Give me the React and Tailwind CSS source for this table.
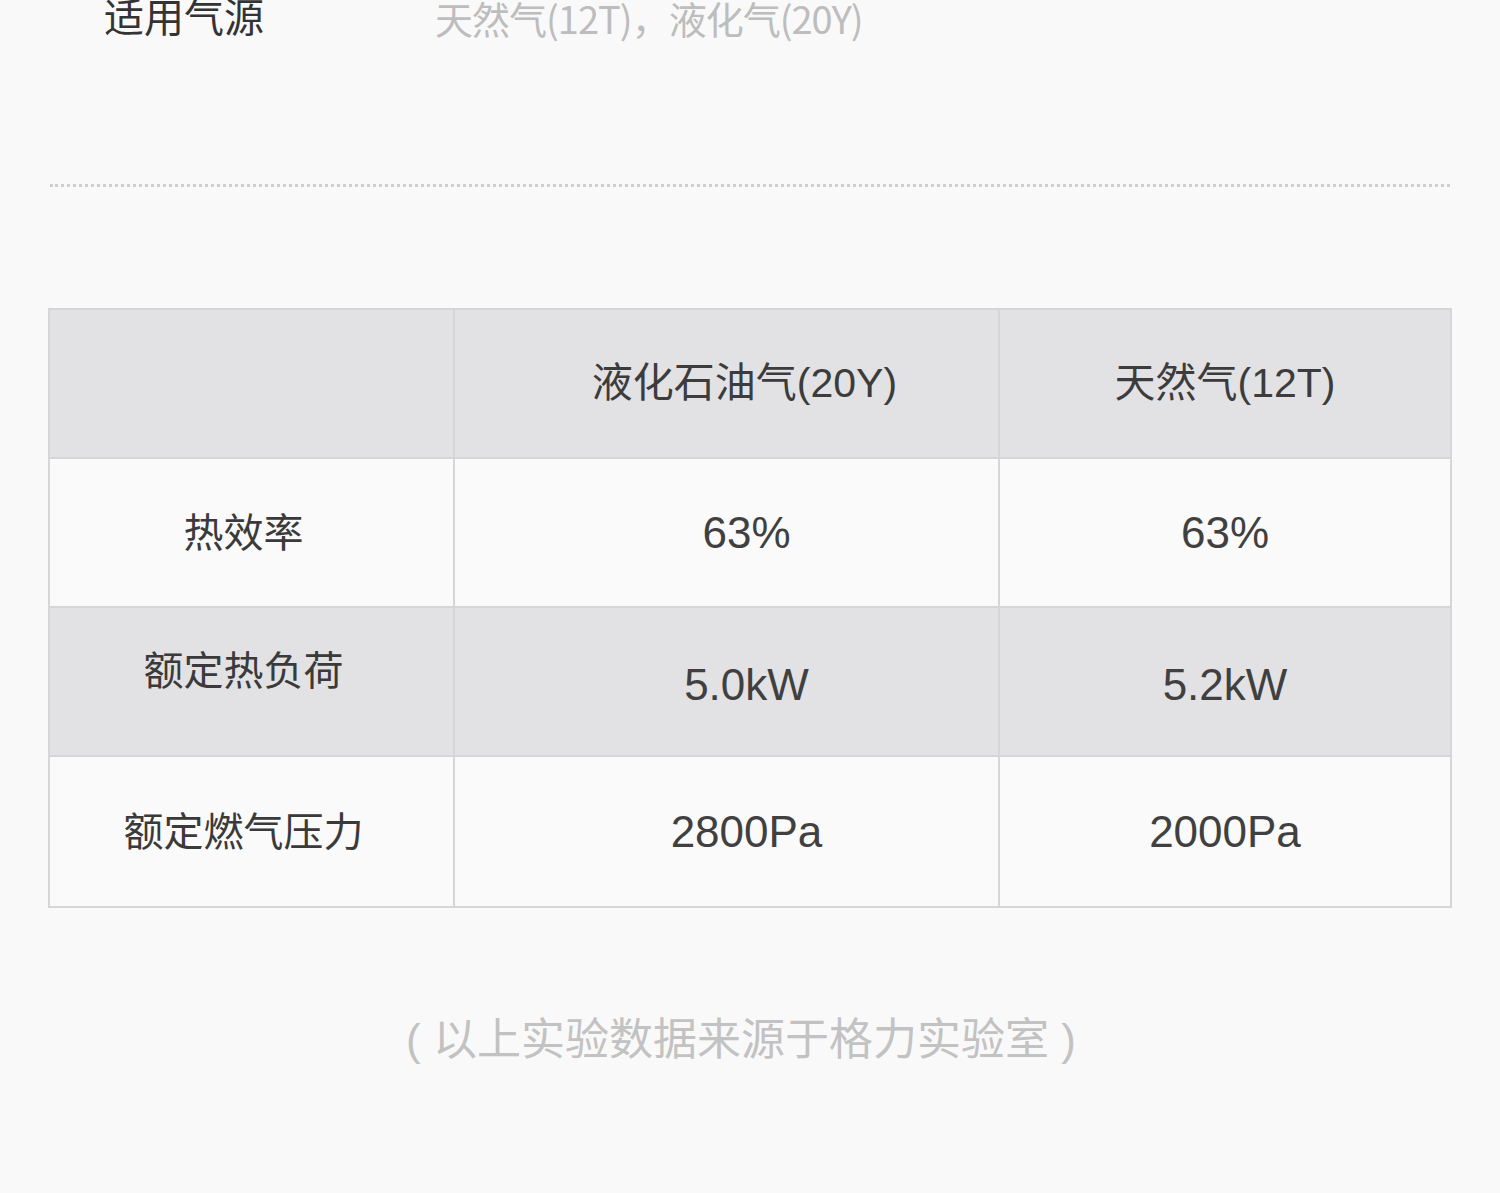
const rows = [
  { label: "热效率", lpg: "63%", ng: "63%", shade: false },
  { label: "额定热负荷", lpg: "5.0kW", ng: "5.2kW", shade: true },
  { label: "额定燃气压力", lpg: "2800Pa", ng: "2000Pa", shade: false },
];

export default function App() {
  return (
    <div className="w-[1500px] h-[1193px] overflow-hidden bg-[#f9f9f9] text-[#3a3a3a] font-['Liberation_Sans','Noto_Sans_CJK_SC',sans-serif]">
      {/* spec line */}
      <div className="flex items-center h-[40px] -mt-[2px] text-[40px] leading-none">
        <span className="ml-[104px] w-[331px] text-[#333]">适用气源</span>
        <span className="text-[38px] tracking-[-1px] text-[#bdbdbd] font-['Noto_Sans_CJK_SC',sans-serif]">
          天然气(12T)，液化气(20Y)
        </span>
      </div>

      <div className="mx-[50px] mt-[146px] border-t-[3px] border-dotted border-[#cfcfcf]" />

      {/* table */}
      <div className="ml-[48px] mt-[121px] w-[1404px] border-2 border-[#d6d6d8] leading-none">
        <div className="flex h-[149px] bg-[#e2e2e4] border-b-2 border-[#d6d6d8] text-[41px]">
          <div className="w-[405px] border-r-2 border-[#d6d6d8]" />
          <div className="w-[545px] border-r-2 border-[#d6d6d8] flex items-center justify-center pl-[36px] text-[#3c3c3c]">
            液化石油气(20Y)
          </div>
          <div className="flex-1 flex items-center justify-center text-[#3c3c3c]">天然气(12T)</div>
        </div>
        {rows.map((r, i) => (
          <div
            key={r.label}
            className={
              "flex h-[149px] " +
              (r.shade ? "bg-[#e2e2e4] " : "bg-[#fafafa] ") +
              (i < rows.length - 1 ? "border-b-2 border-[#d6d6d8]" : "")
            }
          >
            <div className="w-[405px] border-r-2 border-[#d6d6d8] flex items-center justify-center pr-[16px] text-[40px] text-[#3a3a3a]">
              <span className={r.shade ? "-mt-[22px]" : ""}>{r.label}</span>
            </div>
            <div className="w-[545px] border-r-2 border-[#d6d6d8] flex items-center justify-center pl-[40px] text-[44px] text-[#404040]">
              <span className={r.shade ? "mt-[6px]" : ""}>{r.lpg}</span>
            </div>
            <div className="flex-1 flex items-center justify-center text-[44px] text-[#404040]">
              <span className={r.shade ? "mt-[6px]" : ""}>{r.ng}</span>
            </div>
          </div>
        ))}
      </div>

      <div className="mt-[110px] text-center text-[44px] leading-none text-[#c2c2c2] pr-[18px]">
        ( 以上实验数据来源于格力实验室 )
      </div>
    </div>
  );
}
